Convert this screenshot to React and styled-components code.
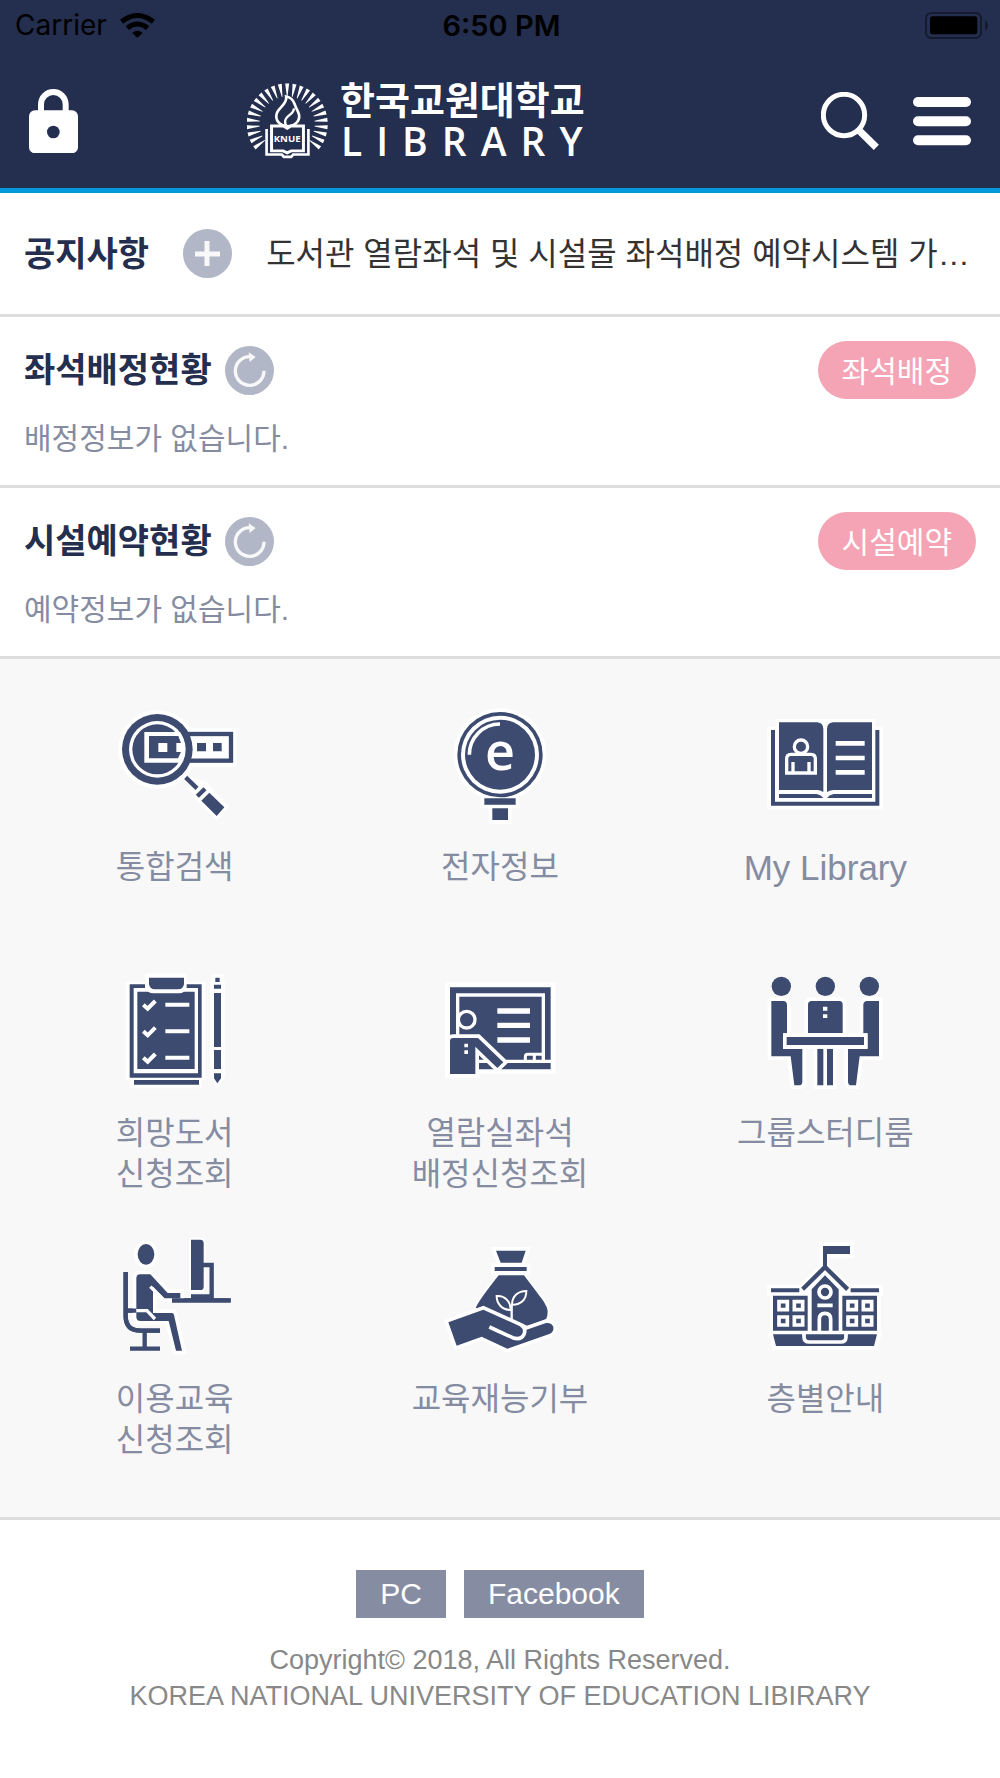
import React from 'react';
import styled, { createGlobalStyle } from 'styled-components';

const NAVY = '#242e4e';
const INK = '#3d4b70';

const GlobalStyle = createGlobalStyle`
  * {
    box-sizing: border-box;
  }
  body {
    margin: 0;
    background-color: #fff;
    font-family: "Liberation Sans", "Noto Sans CJK KR", sans-serif;
  }
  h1, h2, p {
    margin: 0;
  }
  button {
    border: 0;
    padding: 0;
    background: none;
    font: inherit;
    cursor: pointer;
  }
  a {
    color: inherit;
    text-decoration: none;
  }
  svg {
    display: block;
  }
`

const Header = styled.header`
  background-color: ${NAVY};
  border-bottom: 5px solid #0097db;
`;

const StatusBar = styled.div`
  display: grid;
  grid-template-columns: 1fr auto 1fr;
  align-items: center;
  height: 50px;
  padding: 0 12px 0 15px;
  color: #000;
  font-family: Inter, sans-serif;
  font-size: 28px;
`;

const Carrier = styled.div`
  display: flex;
  align-items: center;
  gap: 13px;
`;

const Clock = styled.time`
  font-size: 29px;
  font-weight: 600;
`;

const Battery = styled.svg`
  justify-self: end;
`;

const Nav = styled.nav`
  display: grid;
  grid-template-columns: 218px 1fr auto;
  align-items: center;
  height: 138px;
  padding: 4px 29px 0;
`;

const NavTools = styled.div`
  display: flex;
  align-items: center;
  gap: 34px;
`;

const Brand = styled.a`
  display: flex;
  align-items: center;
  gap: 12px;
  color: #fff;
`;

const BrandText = styled.span`
  display: flex;
  flex-direction: column;
`;

const BrandName = styled.span`
  font-size: 38px;
  font-weight: 700;
  line-height: 40px;
`;

const BrandSub = styled.span`
  padding-left: 1px;
  font-family: "Open Sans", sans-serif;
  font-size: 39px;
  font-weight: 600;
  line-height: 40px;
  letter-spacing: 14px;
`;

const Notice = styled.section`
  display: flex;
  align-items: center;
  gap: 34px;
  height: 124px;
  padding: 0 24px;
  border-bottom: 3px solid #ddd;
`;

const Title = styled.h2`
  flex: none;
  color: ${NAVY};
  font-size: 34px;
  font-weight: 700;
  line-height: 48px;
`;

const RoundButton = styled.button`
  flex: none;
  width: 49px;
  height: 49px;
  border-radius: 50%;
  background-color: #b1b7c7;
`;

const NoticeLink = styled.a`
  flex: 1;
  min-width: 0;
  overflow: hidden;
  color: #333;
  font-size: 32px;
  line-height: 48px;
  white-space: nowrap;
  text-overflow: ellipsis;
`;

const Status = styled.section`
  padding: 24px 24px 26px;
  border-bottom: 3px solid #ddd;
`;

const StatusHead = styled.div`
  display: flex;
  align-items: center;
  gap: 13px;
`;

const Pill = styled.button`
  height: 58px;
  margin-left: auto;
  padding: 0 24px 2px;
  border-radius: 29px;
  background-color: #f4a4b5;
  color: #fff;
  font-size: 30px;
`;

const StatusText = styled.p`
  margin-top: 20px;
  color: #858ca2;
  font-size: 30px;
  line-height: 40px;
`;

const Menu = styled.nav`
  display: grid;
  grid-template-columns: repeat(3, 1fr);
  row-gap: 43px;
  padding: 47px 12px 56px;
  background-color: #f8f8f8;
  border-bottom: 3px solid #ddd;
`;

const MenuItem = styled.a`
  display: flex;
  flex-direction: column;
  align-items: center;
  gap: 21px;
`;

const MenuLabel = styled.span`
  min-height: 82px;
  color: #858ca2;
  font-size: ${props => props.$latin ? '35px' : '32px'};
  line-height: 41px;
  text-align: center;
  white-space: pre-line;
`;

const Footer = styled.footer`
  display: flex;
  flex-direction: column;
  align-items: center;
  padding: 50px 24px 60px;
  color: #888;
  font-size: 27px;
  line-height: 36px;
  text-align: center;
`;

const FooterLinks = styled.div`
  display: flex;
  gap: 18px;
  margin-bottom: 24px;
`;

const FooterLink = styled.a`
  padding: 0 24px;
  background-color: #868da2;
  color: #fff;
  font-size: 30px;
  line-height: 48px;
`;

const Glyph = ({ x, y, children }) => (
  <svg width="120" height="120" viewBox={`${x} ${y} 360 360`} fill={INK} overflow="visible" aria-hidden="true">
    {children}
  </svg>
)

// shape with a white rim painted behind its fill
const rim = { stroke: '#fff', strokeWidth: 22, paintOrder: 'stroke' }

const Wifi = () => (
  <svg width="35" height="25" viewBox="361 35 105 75" fill="none" stroke="#000" strokeWidth="15" aria-hidden="true">
    <path d="M366 61Q413 24 461 61" />
    <path d="M383 80Q413 56 444 80" />
    <path d="M398 95Q413 82 429 95L413 109Z" fill="#000" stroke="none" />
  </svg>
)

const BatteryIcon = () => (
  <Battery width="63" height="27" viewBox="1275 32 189 81" aria-label="Battery full">
    <rect x="1278" y="35" width="165" height="75" rx="16" fill="none" stroke="#151b2f" strokeWidth="6" />
    <rect x="1290" y="45" width="142" height="54" rx="8" />
    <path d="M1455 57Q1464 64 1464 73Q1464 82 1455 88Z" fill="#151b2f" />
  </Battery>
)

const LockIcon = () => (
  <svg width="49" height="64" viewBox="87 266 147 192" aria-hidden="true">
    <path d="M123 340V312A37 37 0 0 1 197 312V340" fill="none" stroke="#fff" strokeWidth="18" />
    <rect x="87" y="330" width="147" height="129" rx="18" fill="#fff" />
    <circle cx="160" cy="395" r="19" fill={NAVY} />
  </svg>
)

const SearchIcon = () => (
  <svg width="58" height="58" viewBox="963 272 174 174" fill="none" stroke="#fff" aria-hidden="true">
    <circle cx="1032" cy="341" r="62" strokeWidth="15" />
    <path d="M1076 386L1129 438" strokeWidth="22" />
  </svg>
)

const BarsIcon = () => (
  <svg width="58" height="58" viewBox="1239 275 174 174" fill="#fff" aria-hidden="true">
    {[290, 348, 405].map(y => (
      <rect key={y} x="1239" y={y} width="174" height="30" rx="15" />
    ))}
  </svg>
)

const Emblem = () => (
  <svg width="81" height="76" viewBox="741 250 244 228" fill="none" stroke="#fff" aria-hidden="true">
    {Array.from({ length: 25 }, (_, i) => (
      <path
        key={i}
        d="M856 251H868L863 290H861Z"
        fill="#fff"
        stroke="none"
        transform={`rotate(${(i - 12) * 10.5} 862 373)`}
      />
    ))}
    <path d="M859 290C863 312 838 322 831 340C824 362 840 378 862 380C886 380 900 364 898 346C897 336 888 326 884 312C880 300 870 292 859 290Z" fill={NAVY} strokeWidth="8" />
    <path d="M882 326C884 344 858 346 856 364C855 372 859 378 863 380" strokeWidth="7" />
    <path d="M800 388V465H846L852 472H874L880 465H926V388" fill={NAVY} strokeWidth="8" />
    <path d="M815 379H851L862 386L873 379H911V454H874L862 460L850 454H815Z" fill={NAVY} strokeWidth="9" />
    <text x="862" y="426" fill="#fff" stroke="none" fontFamily="Liberation Sans Narrow, Open Sans" fontWeight="700" fontSize="29" textAnchor="middle">KNUE</text>
  </svg>
)

const PlusIcon = () => (
  <svg width="49" height="49" viewBox="0 0 49 49" fill="none" stroke="#f8f8f8" strokeWidth="5" aria-hidden="true">
    <path d="M12 25H37M24 12V37" />
  </svg>
)

const ReloadIcon = () => (
  <svg width="49" height="49" viewBox="674 441 147 147" fill="none" stroke="#f8f8f8" aria-hidden="true">
    <path d="M791 515A43 43 0 1 1 750 473" strokeWidth="10" />
    <path d="M745 460L766 474L748 489Z" fill="#f8f8f8" stroke="none" />
  </svg>
)

const FindIcon = () => (
  <Glyph x={45} y={48}>
    <circle cx="172" cy="178" r="118" fill="#fff" />
    <path d="M260 115H409V230H260ZM250 255L318 276L388 350L350 392L280 322Z" fill="#fff" />
    <rect x="250" y="132" width="143" height="80" fill="#fff" stroke={INK} strokeWidth="13" />
    <path d="M291 159H318V184H291ZM339 159H365V184H339Z" />
    <circle cx="172" cy="178" r="106" />
    <circle cx="172" cy="178" r="85" fill="#fff" />
    <circle cx="172" cy="178" r="75" />
    <path d="M133 126H240Q250 142 253 160L253 200L240 218H133Z" fill="#fff" />
    <path d="M147 138H235L243 159H229V186H243L234 205H147Z" />
    <rect x="175" y="159" width="27" height="27" fill="#fff" />
    <path d="M257 262L291 295" stroke={INK} strokeWidth="13" />
    <path d="M292 319L315 296" stroke={INK} strokeWidth="13" />
    <path d="M328 308L373 352L350 378L304 332Z" />
  </Glyph>
)

const EbookIcon = () => (
  <Glyph x={60} y={48}>
    <path d="M182 320H298V355H275V402H206V355H182Z" fill="#fff" />
    <circle cx="240" cy="194" r="139" fill="#fff" />
    <circle cx="240" cy="194" r="128" />
    <circle cx="240" cy="194" r="117" fill="#fff" />
    <circle cx="240" cy="194" r="105" />
    <path d="M148 194A92 92 0 0 1 240 102" fill="none" stroke="#fff" strokeWidth="11" />
    <text x="240" y="241" fill="#fff" fontFamily="Open Sans" fontWeight="600" fontSize="156" textAnchor="middle">e</text>
    <path d="M193 325H287V344H193ZM217 355H264V390H217Z" />
  </Glyph>
)

const MyLibraryIcon = () => (
  <Glyph x={105} y={48}>
    <path d="M111 110H137V87H436V110H459V358H111Z" fill="#fff" />
    <path d="M123 120V347H448V120H436V335H135V120Z" />
    <path d="M147 97H262Q280 99 280 117V306Q270 300 262 300H147Z" />
    <path d="M426 97H309Q291 99 291 117V306Q301 300 311 300H426Z" />
    <path d="M147 312H260Q274 315 280 324H147ZM426 312H311Q297 315 291 324H426Z" />
    <g fill="none" stroke="#fff" strokeWidth="10">
      <circle cx="213" cy="170" r="20" />
      <path d="M170 249V206Q170 193 183 193H243Q256 193 256 206V249ZM189 216V248M237 216V248" />
      <path d="M317 160H404M317 204H404M317 247H404" strokeWidth="14" />
    </g>
  </Glyph>
)

const WishIcon = () => (
  <Glyph x={45} y={36}>
    <path d="M78 66H135V41H260V66H316V361H305V385H90V361H78Z" fill="#fff" />
    <path d="M335 42H370V63H375V350L352 386L330 350V63H335Z" fill="#fff" />
    <path d="M89 73H305V353H89Z" />
    <path d="M101 84H294V340H101Z" fill="#fff" />
    <path d="M112 95H284V327H112Z" />
    <path d="M135 41H260V82Q254 100 238 100H160Q142 100 135 82Z" fill="#fff" />
    <path d="M147 53H252V72Q250 88 234 88H165Q149 88 147 72Z" />
    <path d="M102 360H297V374H102Z" />
    {[134, 214, 293].map(y => (
      <path key={y} d={`M130 ${y}L143 ${y + 12}L166 ${y - 11}M196 ${y}H268`} fill="none" stroke="#fff" strokeWidth="12" />
    ))}
    <path d="M346 53H359V66H346ZM342 74H363V86H342ZM342 99H363V261H342ZM342 270H363V327H342ZM342 340H363V355L352 370L342 355Z" />
  </Glyph>
)

const SeatIcon = () => (
  <Glyph x={120} y={36}>
    <path d="M135 67H467V341H237V354H135Z" fill="#fff" />
    <path d="M150 82H452V299H150ZM237 309H452V328H237Z" />
    <g fill="none" stroke="#fff">
      <path d="M173 240V105H430V300" strokeWidth="10" />
      <path d="M376 300V290Q376 283 383 283H430M403 283V300" strokeWidth="9" />
      <path d="M292 153H390M292 196H390M292 240H390" strokeWidth="16" />
    </g>
    <circle cx="200" cy="179" r="25" stroke="#fff" strokeWidth="10" />
    <path d="M150 342V243Q150 234 160 234H234L310 307L292 324L226 260V342Z" {...rim} />
    <path d="M193 251H204V262H193ZM193 271H204V282H193Z" fill="#fff" />
  </Glyph>
)

const StudyIcon = () => {
  const sitter = 'M124 123H160Q171 124 171 135V220H159V267H217V365Q217 376 206 376H193L182 289H124Z'
  return (
    <Glyph x={105} y={36}>
      <circle cx="154" cy="79" r="29" />
      <circle cx="286" cy="79" r="29" />
      <circle cx="418" cy="79" r="29" />
      <path d="M262 266H280V376H262ZM291 266H309V376H291Z" {...rim} />
      <path d="M234 219V134Q234 123 245 123H328Q338 123 338 134V219Z" {...rim} />
      <path d={sitter} {...rim} />
      <path d={sitter} transform="translate(571 0) scale(-1 1)" {...rim} />
      <path d="M170 231H402V255H170Z" {...rim} />
      <path d="M279 140H292V152H279ZM279 163H292V174H279Z" fill="#fff" />
    </Glyph>
  )
}

const DeskIcon = () => (
  <Glyph x={45} y={54}>
    <path d="M273 59H301Q311 60 311 70V200Q311 210 301 210H273Z" {...rim} strokeWidth="12" />
    <g fill="none" stroke={INK} strokeWidth="13">
      <path d="M309 135H335V229H273M216 241H392" />
      <path d="M77 156V288Q77 332 122 332H180M134 338V386M90 386H180M80 272H112" />
    </g>
    <ellipse cx="138" cy="103" rx="25" ry="31" {...rim} />
    <path d="M109 290V175Q109 163 121 163H151L203 219H241V235H193L159 200V279H216Q221 279 222 285L246 392H228L206 303H122Q109 303 109 290Z" {...rim} />
    <path d="M77 156V288Q77 332 122 332H180" fill="none" stroke={INK} strokeWidth="13" />
    <path d="M80 272H109M216 241H392" stroke={INK} strokeWidth="13" />
    <path d="M109 272H141L165 297M151 200L190 239" fill="none" stroke="#fff" strokeWidth="10" />
  </Glyph>
)

const DonateIcon = () => (
  <Glyph x={1020} y={54}>
    <path d="M1188 92H1277L1265 128H1202Z" {...rim} />
    <path d="M1196 166H1272L1328 240Q1343 262 1343 275Q1343 290 1338 298L1276 320L1150 275L1127 264Q1135 243 1196 166Z" {...rim} strokeWidth="12" />
    <path d="M1184 141H1280V153H1184Z" {...rim} />
    <g fill="none" stroke="#fff" strokeWidth="6">
      <path d="M1235 305V256" strokeWidth="7" />
      <path d="M1232 270C1205 270 1190 250 1190 228C1215 226 1232 245 1232 270Z" />
      <path d="M1236 254C1236 228 1255 213 1279 213C1279 240 1262 255 1236 254Z" />
    </g>
    <path d="M1045 307L1150 269L1258 318L1280 329L1338 309Q1355 307 1360 321Q1362 336 1350 341L1222 386L1145 350L1070 377Z" {...rim} />
    <path d="M1168 321L1238 353Q1262 362 1272 343Q1279 326 1264 315" fill="none" stroke="#fff" strokeWidth="11" />
  </Glyph>
)

const FloorIcon = () => (
  <Glyph x={105} y={54}>
    <path d="M268 66H371V114H297V135L362 194H459V228H452V332L456 336L443 390H128L114 336L119 332V228H111V194H208L268 135Z" fill="#fff" />
    <path d="M279 78H360V102H291V140H279ZM123 205H208V217H123ZM362 205H447V217H362Z" />
    <path d="M218 208L285 141L353 208" fill="none" stroke={INK} strokeWidth="13" />
    <path d="M129 227H233V332H129ZM337 227H441V332H337ZM245 332V208L285 166L326 208V332ZM129 343H441L432 378H138Z" />
    <g fill="none" stroke="#fff" strokeWidth="11">
      <path d="M222 338V350Q222 366 238 366H332Q348 366 348 350V338" />
      <circle cx="285" cy="216" r="18" />
      <path d="M262 256H308M268 334V298Q268 280 285 280Q302 280 302 298V334" />
      {[147, 193, 354, 400].map(x => (
        <path key={x} d={`M${x} 245h25v24h-25ZM${x} 291h25v24h-25Z`} />
      ))}
    </g>
  </Glyph>
)

const menu = [
  { label: '통합검색', Icon: FindIcon },
  { label: '전자정보', Icon: EbookIcon },
  { label: 'My Library', Icon: MyLibraryIcon, latin: true },
  { label: '희망도서\n신청조회', Icon: WishIcon },
  { label: '열람실좌석\n배정신청조회', Icon: SeatIcon },
  { label: '그룹스터디룸', Icon: StudyIcon },
  { label: '이용교육\n신청조회', Icon: DeskIcon },
  { label: '교육재능기부', Icon: DonateIcon },
  { label: '층별안내', Icon: FloorIcon },
]

const StatusBlock = ({ title, action, text }) => (
  <Status>
    <StatusHead>
      <Title>{title}</Title>
      <RoundButton aria-label="새로고침"><ReloadIcon /></RoundButton>
      <Pill>{action}</Pill>
    </StatusHead>
    <StatusText>{text}</StatusText>
  </Status>
)

export default () => {
  return (
    <>
      <GlobalStyle />
      <Header>
        <StatusBar>
          <Carrier>Carrier <Wifi /></Carrier>
          <Clock>6:50 PM</Clock>
          <BatteryIcon />
        </StatusBar>
        <Nav>
          <button aria-label="로그인"><LockIcon /></button>
          <Brand href="#">
            <Emblem />
            <BrandText>
              <BrandName>한국교원대학교</BrandName>
              <BrandSub>LIBRARY</BrandSub>
            </BrandText>
          </Brand>
          <NavTools>
            <button aria-label="검색"><SearchIcon /></button>
            <button aria-label="메뉴"><BarsIcon /></button>
          </NavTools>
        </Nav>
      </Header>
      <Notice>
        <Title>공지사항</Title>
        <RoundButton aria-label="더보기"><PlusIcon /></RoundButton>
        <NoticeLink href="#">도서관 열람좌석 및 시설물 좌석배정 예약시스템 가…</NoticeLink>
      </Notice>
      <StatusBlock title="좌석배정현황" action="좌석배정" text="배정정보가 없습니다." />
      <StatusBlock title="시설예약현황" action="시설예약" text="예약정보가 없습니다." />
      <Menu>
        {menu.map(({ label, Icon, latin }) => (
          <MenuItem href="#" key={label}>
            <Icon />
            <MenuLabel $latin={latin}>{label}</MenuLabel>
          </MenuItem>
        ))}
      </Menu>
      <Footer>
        <FooterLinks>
          <FooterLink href="#">PC</FooterLink>
          <FooterLink href="#">Facebook</FooterLink>
        </FooterLinks>
        <p>Copyright© 2018, All Rights Reserved.</p>
        <p>KOREA NATIONAL UNIVERSITY OF EDUCATION LIBIRARY</p>
      </Footer>
    </>
  );
};
